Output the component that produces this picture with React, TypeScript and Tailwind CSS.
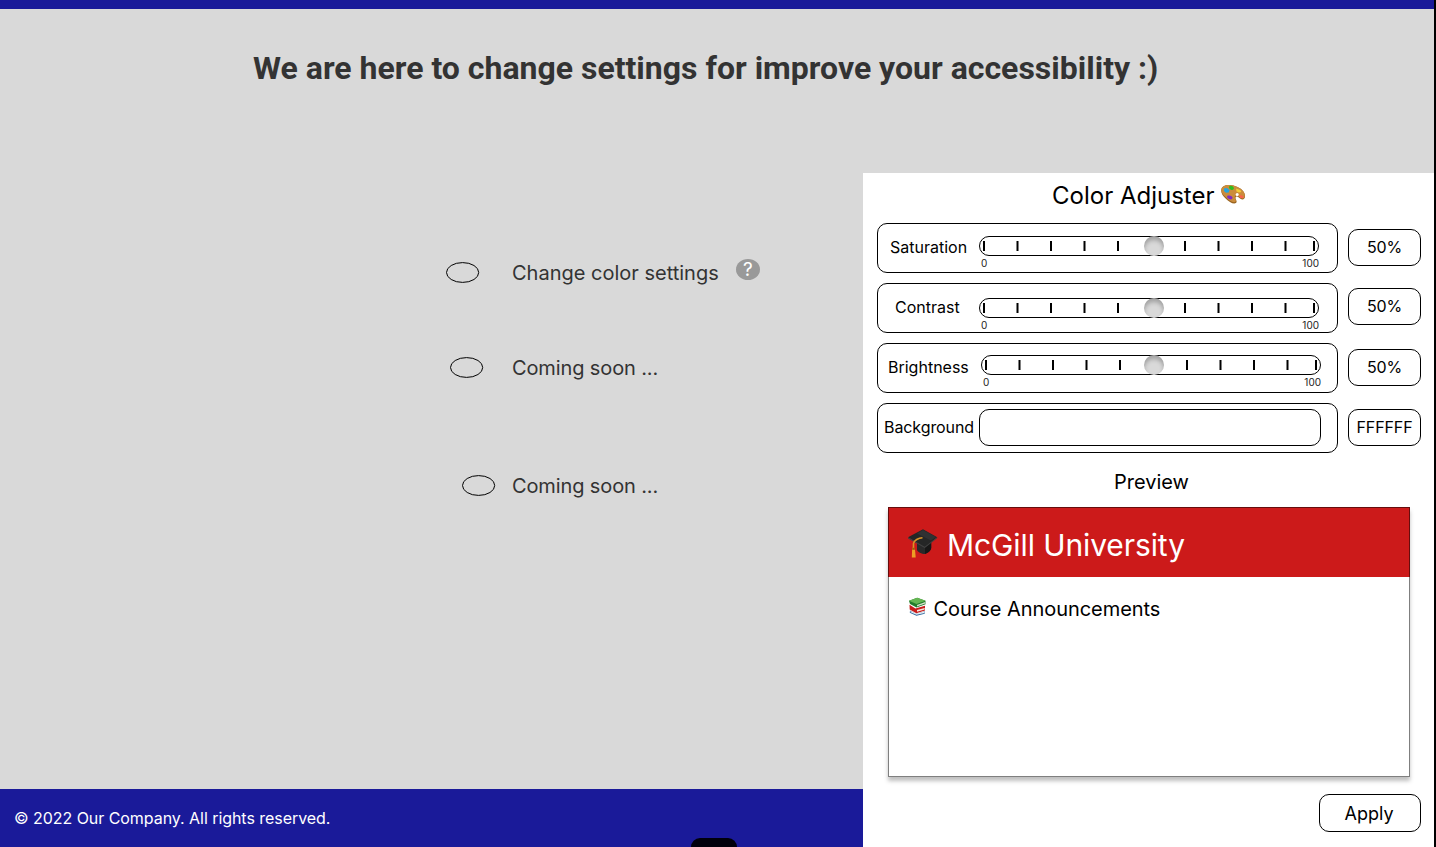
import React from "react";

const TICKS = [4, 37.5, 71, 104.5, 138, 171.5, 205, 238.5, 272, 305.5, 334];

function Palette() {
  return (
    <svg width="26" height="22" viewBox="0 0 26 22" className="mt-[11px] ml-[6px] shrink-0">
      <path d="M1.200 6.200C1.500 2.500 5 .9 9.500 1.100c5 .2 11.700 2.700 14.300 6.900 1.500 2.400 1.800 5.400.3 6.800-1.700 1.500-4-.2-5.600-1.600-1.400-1.200-3.200-.6-3 .9.200 1.900 2.200 3.800.4 5-2.500 1.400-7.200-1.300-10-4.400C3 12.200 1 9.200 1.200 6.200Z" fill="#98631f" />
      <path d="M1.300 5.700C1.700 2.300 5 .7 9.500.9c5 .2 11.500 2.700 14.100 6.900 1.400 2.300 1.700 4.900.4 6.100-1.700 1.500-4-.2-5.600-1.600-1.500-1.200-3.900-.6-3.600 1.300.300 1.700 2 3.200.7 4.200-2.300 1.300-6.700-1.300-9.300-4.200C3.200 11 1.100 8.500 1.300 5.700Z" fill="#cb8c3c" />
      <path d="m4 4.500 3-.6 2.500 2-.8 2.600-2.700.2L4 7Z" fill="#26a6df" />
      <path d="M9.300 2.200c1.500-1 4-.1 4.500 1.500.4 1.600-1 2.700-2.700 2C9.500 5.200 8.300 3.500 9.300 2.200Z" fill="#30bd20" />
      <path d="m16 4.500 2 .8 2.300.7 1 2-2.300.4-2.500-1Z" fill="#f4ce35" />
      <path d="M19.500 11.500c1.300-.7 4 .4 4.300 1.800-.4 1-3 1-4 .100Z" fill="#fa624c" />
      <path d="M7.500 11.800c1.500-1 4.500-.1 5 1.500.3 1.500-.8 2.500-2.700 2-1.600-.4-3.500-2-2.300-3.500Z" fill="#802cc1" />
      <circle cx="17.200" cy="10.600" r="1.500" fill="#fff" />
    </svg>
  );
}

function GraduationCap() {
  return (
    <svg width="30" height="30" viewBox="0 0 30 30" className="mt-[21px] ml-[19px] shrink-0">
      <path d="M9 12.500v8.200c0 2 4.800 4.400 8 4.400 3.800-1.500 6.200-4 6.200-6V11Z" fill="#292929" />
      <path d="M17 18.500v6.600c3.800-1.500 6.200-4 6.200-6v-5.400Z" fill="#171717" />
      <path d="M0 8.300 15 .3l14.200 7.900L16.700 18.500Z" fill="#252626" />
      <path d="m0 8.300 16.700 9.400L29.200 8.200v1L16.700 19 0 9.500Z" fill="#414141" />
      <path d="m15 1 13 7.100-5 3.500L9 4.500Z" fill="#303132" />
      <path d="M14.500 8.800C10.500 9 6 11.300 5.500 14.500v7" fill="none" stroke="#d99427" strokeWidth="1.600" />
      <path d="m4.200 18.800 2.700.2.800 9.600H3.800Z" fill="#ed9e25" />
      <path d="M4.200 18.800h2.700v2H4.200Z" fill="#9d5a0d" />
    </svg>
  );
}

function Books() {
  return (
    <svg width="19" height="20" viewBox="0 0 19 20" className="shrink-0">
      <path d="m2 13.500 6.500 3.300 8.200-2.500v2.500l-8.200 2-6.700-3Z" fill="#27649c" />
      <path d="m2.500 14 6 2.600 8-2v1.400l-8 1.800-6-2.600Z" fill="#e9edf0" />
      <path d="m1.500 7.700 5.900 3.700 9.600-2.600v4.700l-8.600 2.700-6.700-3.600Z" fill="#c91c1b" />
      <path d="m9 13.100 7.700-2.200v1.500L9 14.700Z" fill="#f5e7df" />
      <path d="m1 3.800 8.200-3.100 8.300 3.100v3.500L8.600 10.500 2 7Z" fill="#237d2b" />
      <path d="m1 3.800 8.200-3.100 8.300 3L8.500 7Z" fill="#65b653" />
      <path d="m9 7.900 8.200-2.900v1.600L9 9.500Z" fill="#d5e0cc" />
    </svg>
  );
}

function HelpBadge() {
  return (
    <span className="mt-[6px] ml-[17px] flex h-[21px] w-6 items-center justify-center rounded-[50%] bg-[#999] text-[19px] leading-none text-white">
      ?
    </span>
  );
}

function Ruler() {
  return (
    <div className="relative h-5 w-[340px] rounded-[10px] border border-black">
      <svg width="340" height="20" className="absolute -top-px -left-px">
        {TICKS.map((x) => (
          <rect key={x} x={x} y="5" width="2" height="10" />
        ))}
      </svg>
    </div>
  );
}

type SliderProps = {
  label: string;
  labelClass: string;
  trackClass: string;
  thumbClass: string;
  valueClass: string;
};

function SliderRow({ label, labelClass, trackClass, thumbClass, valueClass }: SliderProps) {
  return (
    <div className="flex h-[50px] gap-[10px]">
      <div className="flex w-[461px] rounded-[10px] border border-black">
        <div className={`w-[101px] shrink-0 text-[16px] leading-[46px] whitespace-nowrap ${labelClass}`}>{label}</div>
        <div className={`relative shrink-0 ${trackClass}`}>
          <Ruler />
          <span className={`absolute top-0 size-5 rounded-full bg-[#d9d9d9] shadow-[inset_0_4px_4px_rgba(0,0,0,0.25)] ${thumbClass}`} />
          <div className="flex justify-between pl-[2px] text-[10px] leading-[15px] text-[#222]">
            <span>0</span>
            <span>100</span>
          </div>
        </div>
      </div>
      <ValueBox className={valueClass}>50%</ValueBox>
    </div>
  );
}

function ValueBox({ className, children }: { className: string; children: React.ReactNode }) {
  return (
    <div className={`flex h-[37px] w-[73px] justify-center rounded-[10px] border border-black text-[16px] leading-[34px] tracking-[-0.1px] ${className}`}>
      {children}
    </div>
  );
}

function ColorAdjuster() {
  return (
    <section className="absolute top-[173px] right-0 flex h-[674px] w-[571px] flex-col bg-white text-black">
      <div className="flex h-[50px] pl-[189px]">
        <h2 className="text-[24px] leading-[45px] whitespace-nowrap">Color Adjuster</h2>
        <Palette />
      </div>
      <div className="flex flex-col gap-[10px] pl-[14px]">
        <SliderRow label="Saturation" labelClass="pl-[12px]" trackClass="mt-[12px]" thumbClass="left-[165px]" valueClass="mt-[6px]" />
        <SliderRow label="Contrast" labelClass="pl-[17px]" trackClass="mt-[14px]" thumbClass="left-[165px]" valueClass="mt-[5px]" />
        <SliderRow label="Brightness" labelClass="pl-[10px]" trackClass="mt-[11px] ml-[2px]" thumbClass="left-[163px]" valueClass="mt-[6px]" />
        <div className="flex h-[50px] gap-[10px]">
          <div className="flex w-[461px] rounded-[10px] border border-black">
            <div className="w-[101px] shrink-0 pl-[6px] text-[16px] leading-[46px] tracking-[-0.08px]">Background</div>
            <div className="mt-[5px] h-[37px] w-[342px] rounded-[10px] border border-black" />
          </div>
          <ValueBox className="mt-[6px]">FFFFFF</ValueBox>
        </div>
      </div>
      <h3 className="mt-[14px] h-[40px] pl-[251px] text-[20px] leading-[30px]">Preview</h3>
      <div className="ml-[25px] flex h-[270px] w-[522px] flex-col bg-white shadow-[0_4px_4px_rgba(0,0,0,0.25)]">
        <div className="flex h-[70px] border border-b-0 border-black/50 bg-[#cc1a1a] text-white">
          <GraduationCap />
          <span className="ml-[9px] text-[30px] leading-[74px] tracking-[-0.1px]">McGill University</span>
        </div>
        <div className="flex grow border border-t-0 border-black/50 pt-[20px] pl-[19px]">
          <Books />
          <span className="ml-[6.500px] text-[20px] leading-[24px] tracking-[-0.05px]">Course Announcements</span>
        </div>
      </div>
      <button className="mt-[17px] ml-[456px] h-[38px] w-[102px] rounded-[10px] border border-black pr-[2px] text-[18px]">Apply</button>
    </section>
  );
}

function Option({ label, className, labelClass, help }: { label: string; className: string; labelClass: string; help?: boolean }) {
  return (
    <div className={`flex h-10 ${className}`}>
      <svg width="34" height="22" viewBox="0 0 34 22" className="mt-[9px] shrink-0">
        <ellipse cx="16.600" cy="10.500" rx="16.100" ry="9.900" fill="none" stroke="#000" />
      </svg>
      <span className={`text-[20px] leading-10 whitespace-nowrap ${labelClass}`}>{label}</span>
      {help && <HelpBadge />}
    </div>
  );
}

export default function App() {
  return (
    <div className="h-[847px] w-[1436px] overflow-hidden bg-black font-['Inter',sans-serif]">
      <div className="relative flex h-full w-[1434px] flex-col bg-[#d9d9d9] text-[#333]">
        <div className="h-[9px] bg-[#1a1a99]" />
        <h1 className="mt-[35px] h-12 pl-[253px] font-['Roboto',sans-serif] text-[32px] leading-12 font-bold whitespace-nowrap">
          We are here to change settings for improve your accessibility :)
        </h1>
        <main className="flex grow flex-col">
          <Option label="Change color settings" className="mt-[161px] ml-[446px]" labelClass="ml-[32px]" help />
          <Option label="Coming soon ..." className="mt-[55px] ml-[450px]" labelClass="ml-[28px] tracking-[-0.12px]" />
          <Option label="Coming soon ..." className="mt-[78px] ml-[462px]" labelClass="ml-[16px] tracking-[-0.12px]" />
        </main>
        <footer className="flex h-[58px] bg-[#1a1a99] pl-[14px] text-[16px] leading-[59px] text-white">
          <span className="w-[677px] tracking-[-0.05px]">© 2022 Our Company. All rights reserved.</span>
          <div className="mt-[49px] h-[9px] w-[46px] rounded-t-[12px] bg-[#00000c]" />
        </footer>
        <ColorAdjuster />
      </div>
    </div>
  );
}
